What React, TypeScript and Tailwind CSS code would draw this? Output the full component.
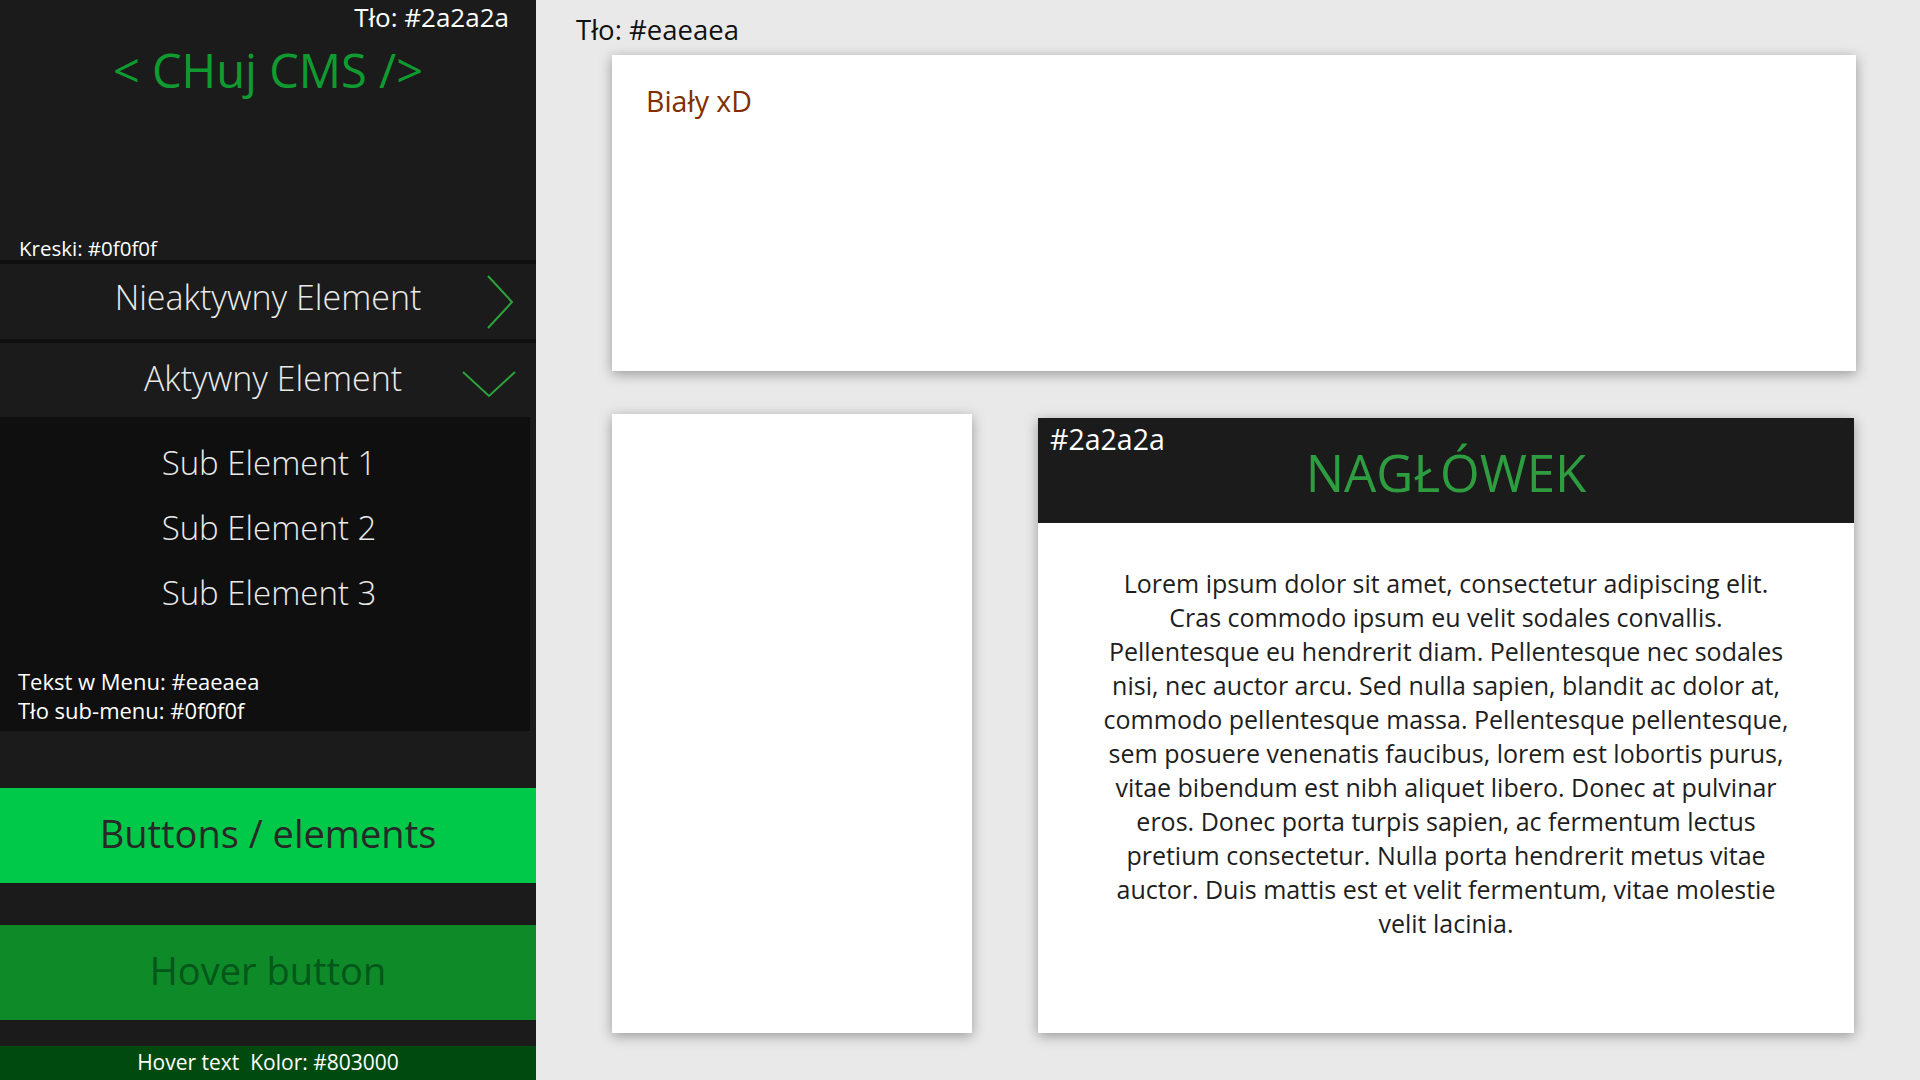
import React from "react"

const lorem = [
  "Lorem ipsum dolor sit amet, consectetur adipiscing elit.",
  "Cras commodo ipsum eu velit sodales convallis.",
  "Pellentesque eu hendrerit diam. Pellentesque nec sodales",
  "nisi, nec auctor arcu. Sed nulla sapien, blandit ac dolor at,",
  "commodo pellentesque massa. Pellentesque pellentesque,",
  "sem posuere venenatis faucibus, lorem est lobortis purus,",
  "vitae bibendum est nibh aliquet libero. Donec at pulvinar",
  "eros. Donec porta turpis sapien, ac fermentum lectus",
  "pretium consectetur. Nulla porta hendrerit metus vitae",
  "auctor. Duis mattis est et velit fermentum, vitae molestie",
  "velit lacinia.",
]

const subItems = ["Sub Element 1", "Sub Element 2", "Sub Element 3"]

function ChevronRight() {
  return (
    <svg width="28" height="54" viewBox="0 0 28 54" fill="none">
      <polyline points="2,1 26,27 2,53" stroke="#2ca33a" strokeWidth="2" />
    </svg>
  )
}

function ChevronDown() {
  return (
    <svg width="54" height="28" viewBox="0 0 54 28" fill="none">
      <polyline points="1,2 27,26 53,2" stroke="#2ca33a" strokeWidth="2" />
    </svg>
  )
}

export default function App() {
  return (
    <div className="flex h-screen w-full overflow-hidden bg-[#e9e9e9] font-['Open_Sans',sans-serif]">
      {/* Sidebar */}
      <aside className="flex w-[536px] shrink-0 flex-col bg-[#1b1b1b] text-[#eaeaea]">
        <div className="flex h-[260px] flex-col">
          <p className="pr-[27px] text-right text-[26px] leading-[34px] text-white">Tło: #2a2a2a</p>
          <h1 className="mt-[8px] text-center text-[47px] leading-[56px] text-[#0f9b30]">&lt; CHuj CMS /&gt;</h1>
          <p className="mt-auto pl-[19px] text-[20.5px] leading-[24px] text-white">Kreski: #0f0f0f</p>
        </div>
        <div className="h-1 bg-[#0f0f0f]" />

        <div className="grid h-[75px] grid-cols-[1fr_auto_1fr] items-center">
          <div />
          <span className="pb-[10px] text-[34px] font-light leading-[44px]">Nieaktywny Element</span>
          <div className="flex justify-end pr-[22px]">
            <ChevronRight />
          </div>
        </div>
        <div className="h-1 bg-[#0f0f0f]" />

        <div className="grid h-[74px] grid-cols-[1fr_auto_1fr] items-center">
          <div />
          <span className="pb-[4px] pl-[10px] text-[34px] font-light leading-[44px]">Aktywny Element</span>
          <div className="mt-[8px] flex justify-end pr-[20px]">
            <ChevronDown />
          </div>
        </div>

        {/* Sub menu */}
        <div className="flex h-[314px] w-[530px] flex-col bg-[#0f0f0f] pt-[24px]">
          <ul className="flex flex-col gap-[21px] pl-[8px] text-center text-[33px] font-light leading-[44px]">
            {subItems.map((item) => (
              <li key={item}>{item}</li>
            ))}
          </ul>
          <div className="mt-auto pb-[6px] pl-[18px] text-[22px] leading-[29px] text-white">
            <p>Tekst w Menu: #eaeaea</p>
            <p>Tło sub-menu: #0f0f0f</p>
          </div>
        </div>

        <button className="mt-[57px] h-[95px] w-full bg-[#00c94a] pb-[4px] text-[38px] text-[#282828]">
          Buttons / elements
        </button>
        <button className="mt-[42px] h-[95px] w-full bg-[#0e8a28] pb-[4px] text-[38px] text-[#04561b]">
          Hover button
        </button>
        <div className="mt-auto flex h-[34px] items-center justify-center bg-[#014a0f] text-[21px] text-white">
          Hover text&nbsp; Kolor: #803000
        </div>
      </aside>

      {/* Content */}
      <main className="flex-1 pt-[12px]">
        <p className="ml-[40px] text-[27.5px] leading-[36px] text-[#111111]">Tło: #eaeaea</p>
        <div className="ml-[76px] w-[1244px]">
          <section className="mt-[7px] h-[316px] bg-white pl-[34px] pt-[27px] shadow-[0_3px_12px_rgba(0,0,0,0.35)]">
            <p className="text-[28.5px] leading-[38px] text-[#803000]">Biały xD</p>
          </section>

          <div className="mt-[43px] flex items-end gap-[66px]">
            <div className="h-[619px] w-[360px] bg-white shadow-[0_3px_12px_rgba(0,0,0,0.35)]" />
            <article className="h-[615px] w-[816px] bg-white shadow-[0_3px_12px_rgba(0,0,0,0.35)]">
              <header className="relative flex h-[105px] items-center justify-center bg-[#1b1b1b] pt-[3px]">
                <span className="absolute left-[12px] top-[4px] text-[28.5px] leading-[34px] text-white">#2a2a2a</span>
                <h2 className="text-[51px] leading-[60px] text-[#2d9d40]">NAGŁÓWEK</h2>
              </header>
              <div className="pt-[43px] text-center text-[25px] leading-[34px] text-[#1e1e1e]">
                {lorem.map((line) => (
                  <p key={line}>{line}</p>
                ))}
              </div>
            </article>
          </div>
        </div>
      </main>
    </div>
  )
}
